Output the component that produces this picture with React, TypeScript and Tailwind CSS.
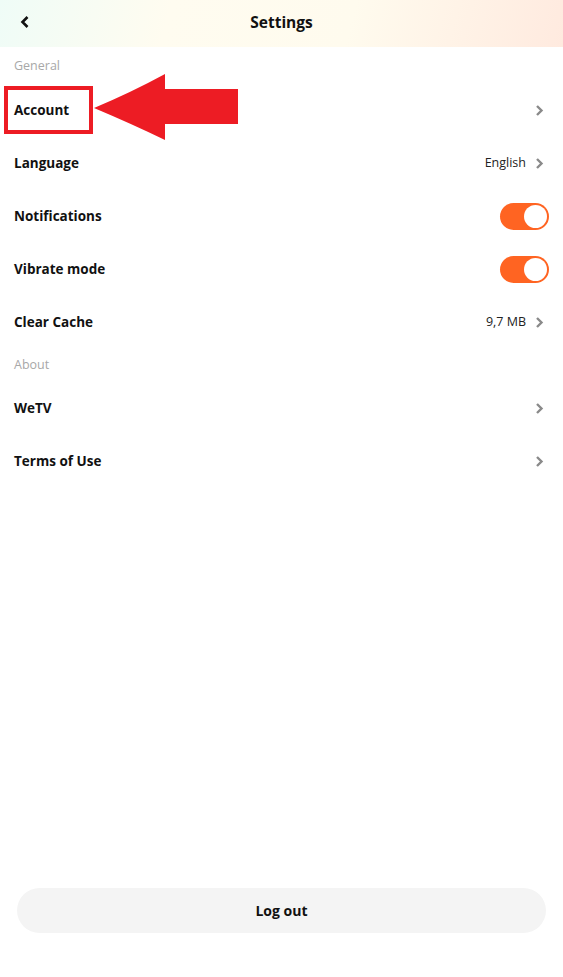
import React from "react";

function Chevron() {
  return (
    <svg width="9" height="13" viewBox="0 0 9 13" className="ml-[9px]">
      <polyline points="2,2 6.5,6.5 2,11" fill="none" stroke="#8a8a8a" strokeWidth="2.4" strokeLinejoin="miter" />
    </svg>
  );
}

function Toggle() {
  return (
    <div className="w-[49px] h-[27px] rounded-full bg-[#ff6422] flex items-center justify-end pr-[2px] -mr-[5px]">
      <div className="w-[23px] h-[23px] rounded-full bg-white" />
    </div>
  );
}

function Row({ label, value, toggle, chevron = true }: { label: string; value?: string; toggle?: boolean; chevron?: boolean }) {
  return (
    <div className="h-[53px] flex items-center justify-between pl-[14px] pr-[19px]">
      <span className="text-[13.5px] font-bold text-[#111]">{label}</span>
      {toggle ? (
        <Toggle />
      ) : (
        <div className="flex items-center">
          {value && <span className="text-[12.5px] text-[#222]">{value}</span>}
          {chevron && <Chevron />}
        </div>
      )}
    </div>
  );
}

function Section({ title, h, pb }: { title: string; h: string; pb: string }) {
  return (
    <div className={`${h} ${pb} flex items-end pl-[14px] text-[12.5px] text-[#a8a8a8]`}>{title}</div>
  );
}

export default function App() {
  return (
    <div className="w-[563px] h-[977px] bg-white relative flex flex-col" style={{ fontFamily: '"Open Sans", "Noto Sans", sans-serif' }}>
      <header className="h-[47px] relative flex items-center justify-center pb-[1px] bg-[linear-gradient(105deg,#effcf7_0%,#fffcf0_30%,#fffbee_62%,#ffeadf_100%)]">
        <svg width="12" height="14" viewBox="0 0 12 14" className="absolute left-[19px] top-[15px]">
          <polyline points="8.5,2 3.5,7 8.5,12" fill="none" stroke="#111" strokeWidth="2.6" />
        </svg>
        <span className="text-[15.5px] font-bold text-[#111]">Settings</span>
      </header>

      <Section title="General" h="h-[37px]" pb="pb-[8px]" />
      <div className="relative">
        <Row label="Account" />
        <div className="absolute left-[4px] top-[2px] w-[89px] h-[48px] border-[4px] border-[#ed1c24]" />
        <svg width="150" height="70" viewBox="0 0 150 70" className="absolute left-[92px] top-[-10px]">
          <path d="M2,34 Q40,18 73,0 L73,15 L146,15 L146,50 L73,50 L73,66 Q40,50 2,34 Z" fill="#ed1c24" />
        </svg>
      </div>
      <Row label="Language" value="English" />
      <Row label="Notifications" toggle />
      <Row label="Vibrate mode" toggle />
      <Row label="Clear Cache" value="9,7 MB" />

      <Section title="About" h="h-[33px]" pb="pb-[7px]" />
      <Row label="WeTV" />
      <Row label="Terms of Use" />

      <div className="flex-1" />
      <div className="px-[17px] pb-[44px]">
        <button className="w-full h-[45px] rounded-full bg-[#f4f4f4] text-[14px] font-bold text-[#111]">Log out</button>
      </div>
    </div>
  );
}
